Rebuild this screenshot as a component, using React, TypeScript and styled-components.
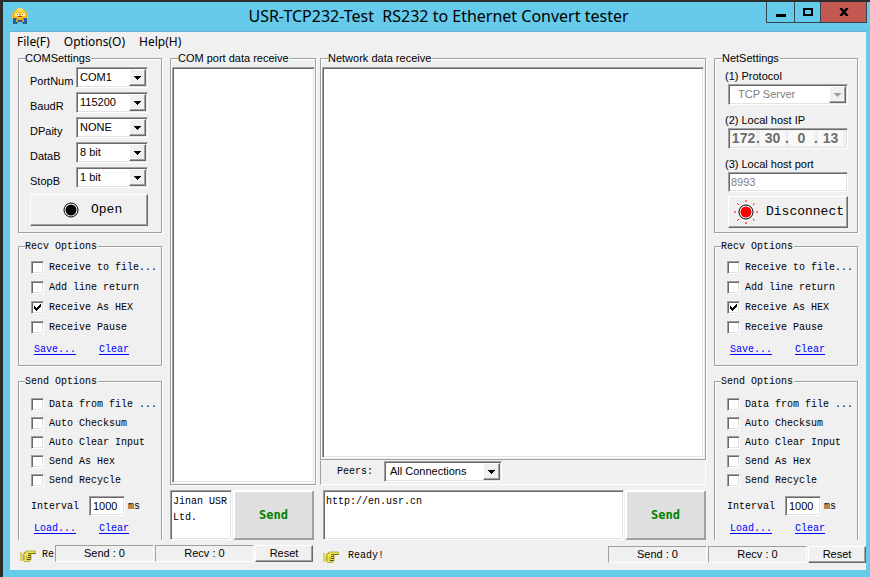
import React from "react";
import styled, { createGlobalStyle, css } from "styled-components";

const SANS = '"Liberation Sans", Arial, sans-serif';
const MONO = '"Liberation Mono", monospace';
const UI = '"Noto Sans", sans-serif';

const GlobalStyle = createGlobalStyle`
  *, *::before, *::after { box-sizing: border-box; }
  body { margin: 0; background: #2d2d2d; font: 11px/13px ${SANS}; color: #000; }
  button, input, select, textarea { font: inherit; color: inherit; margin: 0; border-radius: 0; }
`;

const sunken = css`
  border: 1px solid;
  border-color: #a0a0a0 #fff #fff #a0a0a0;
  box-shadow: inset 1px 1px #696969, inset -1px -1px #e3e3e3;
`;

const raised = css`
  border: 1px solid;
  border-color: #fff #696969 #696969 #fff;
  box-shadow: inset -1px -1px #a0a0a0;
`;

const Desktop = styled.div`
  min-height: 100vh;
  display: flex;
  padding: 2px 0 0 3px;
`;

const Window = styled.main`
  flex: 1;
  min-width: 0;
  display: flex;
  flex-direction: column;
  background: #66caea;
  padding: 0 4px 7px 7px;
`;

const TitleBar = styled.header`
  display: grid;
  grid-template-columns: 1fr auto 1fr;
  height: 30px;
  margin-right: -1px;
  border-bottom: 1px solid #6fb0cf;
`;

const AppIcon = styled.svg`
  margin: 6px 0 0 2px;
`;

const Title = styled.h1`
  margin: 0;
  font: 400 16px/28px ${UI};
  white-space: pre;
`;

const WindowButtons = styled.div`
  display: flex;
  justify-content: flex-end;
  height: 21px;
`;

const WindowButton = styled.button<{ $width: number; $close?: boolean }>`
  width: ${(p) => p.$width}px;
  padding: 0;
  display: grid;
  place-items: center;
  background: ${(p) => (p.$close ? "#c2584f" : "#66caea")};
  border: 1px solid #35454d;
  border-top: 0;
  & + & { margin-left: -1px; }
`;

const Client = styled.div`
  flex: 1;
  display: flex;
  flex-direction: column;
  background: #f0f0f0;
`;

const MenuBar = styled.nav`
  display: flex;
  gap: 14px;
  height: 20px;
  padding-left: 7px;
`;

const MenuItem = styled.button`
  padding: 0;
  border: 0;
  background: none;
  font: 12px/18px ${UI};
`;

const Body = styled.div`
  flex: 1;
  display: grid;
  grid-template-columns: 144px 146px minmax(0, 1fr) 144px;
  column-gap: 8px;
  padding: 0 8px;
`;

const Column = styled.div<{ $gap: number; $pull?: boolean }>`
  display: flex;
  flex-direction: column;
  min-width: 0;
  gap: ${(p) => p.$gap}px;
  margin-left: ${(p) => (p.$pull ? "-4px" : "0")};
`;

const Group = styled.fieldset<{ $mono?: boolean; $pad: string; $open?: boolean; $grow?: boolean }>`
  display: flex;
  flex-direction: column;
  min-width: 0;
  margin: 0;
  padding: ${(p) => p.$pad};
  border: 1px solid #a0a0a0;
  box-shadow: 1px 1px #fff, inset 1px 1px #fff;
  font-family: ${(p) => (p.$mono ? MONO : SANS)};
  font-size: ${(p) => (p.$mono ? 10 : 11)}px;
  ${(p) => p.$grow && css`flex: 1;`}
  ${(p) => p.$open && css`
    flex: 1;
    margin-top: 2px;
    border-bottom: 0;
    box-shadow: 1px 0 #fff, inset 1px 1px #fff;
  `}
`;

const Legend = styled.legend<{ $inset: number }>`
  height: 12px;
  line-height: 13px;
  margin-left: ${(p) => p.$inset}px;
  padding: 0 1px 0 0;
  background: #f0f0f0;
`;

const FieldRow = styled.div`
  display: flex;
  align-items: flex-end;
  justify-content: space-between;
  margin-bottom: 4px;
`;

const Combo = styled.span<{ $width: string }>`
  display: grid;
  grid-template-columns: minmax(0, 1fr);
  width: ${(p) => p.$width};
  height: 21px;
  background: #fff;
  padding: 1px;
  ${sunken}
  & > * { grid-area: 1 / 1; }
`;

const ComboSelect = styled.select<{ $indent: number }>`
  appearance: none;
  width: 100%;
  padding: 0 18px 0 ${(p) => p.$indent}px;
  border: 0;
  background: transparent;
  font: 11px/13px ${SANS};
  &:disabled { color: #808080; opacity: 1; }
`;

const ComboArrow = styled.span`
  justify-self: end;
  display: grid;
  place-items: center;
  width: 17px;
  background: #f0f0f0;
  pointer-events: none;
  ${raised}
`;

const ActionArea = styled.div<{ $top: number }>`
  display: grid;
  padding-top: ${(p) => p.$top}px;
`;

const PushButton = styled.button<{ $pad: number; $gap: number }>`
  display: flex;
  align-items: center;
  gap: ${(p) => p.$gap}px;
  height: 32px;
  padding: 0 0 0 ${(p) => p.$pad}px;
  background: #f0f0f0;
  font: 13px/16px ${MONO};
  white-space: nowrap;
  ${raised}
`;

const NetLabel = styled.label`
  display: block;
  margin: 0 0 1px -3px;
`;

const NetField = styled.div<{ $gap: number }>`
  margin-bottom: ${(p) => p.$gap}px;
`;

const TextField = styled.input<{ $width: string; $pad: number }>`
  display: block;
  width: ${(p) => p.$width};
  height: 20px;
  padding: 0 ${(p) => p.$pad}px;
  background: #fff;
  font: 11px/13px ${SANS};
  ${sunken}
  &:disabled { color: #808080; }
`;

const IpBox = styled.div`
  display: flex;
  align-items: center;
  height: 21px;
  padding: 0 4px 0 2px;
  background: #f0f0f0;
  color: #6d6d6d;
  font: 700 14px/17px ${SANS};
  ${sunken}
`;

const IpCell = styled.input`
  flex: 1;
  min-width: 0;
  width: 0;
  height: 15px;
  padding: 0;
  border: 0;
  background: #f9f9f9;
  text-align: center;
`;

const CheckRow = styled.label<{ $height: number }>`
  display: flex;
  align-items: center;
  gap: 5px;
  height: ${(p) => p.$height}px;
  white-space: nowrap;
`;

const CheckFace = styled.span`
  display: grid;
  width: 13px;
  height: 13px;
  flex: none;
  & > * { grid-area: 1 / 1; }
  & > svg { place-self: center; pointer-events: none; visibility: hidden; }
  & > input:checked + svg { visibility: visible; }
`;

const CheckInput = styled.input`
  appearance: none;
  width: 13px;
  height: 13px;
  background: #fff;
  ${sunken}
`;

const Links = styled.div`
  display: flex;
  gap: 23px;
  margin-top: 6px;
  padding-left: 3px;
  line-height: 14px;
`;

const Link = styled.a`
  color: #00f;
  text-underline-offset: 2px;
`;

const IntervalRow = styled.label`
  display: flex;
  align-items: center;
  gap: 3px;
  height: 20px;
  margin-top: 6px;
`;

const IntervalText = styled.span`
  width: 55px;
`;

const Memo = styled.textarea`
  flex: 1;
  min-width: 0;
  display: block;
  width: 100%;
  padding: 3px 2px;
  background: #fff;
  resize: none;
  font: 10px/16px ${MONO};
  ${sunken}
`;

const Stack = styled.div`
  flex: 1;
  display: flex;
  flex-direction: column;
`;

const PeersBar = styled.div`
  display: flex;
  align-items: center;
  gap: 11px;
  height: 25px;
  padding: 0 0 2px 16px;
  border: 1px solid;
  border-color: #f0f0f0 #fff #fff #a0a0a0;
  font: 10px/13px ${MONO};
`;

const SendRow = styled.div<{ $pad: string }>`
  display: flex;
  gap: 1px;
  height: 50px;
  padding: ${(p) => p.$pad};
`;

const SendButton = styled.button`
  width: 81px;
  flex: none;
  padding: 0;
  background: #dfdfdf;
  color: #008000;
  border: 2px solid;
  border-color: #fff #a0a0a0 #a0a0a0 #fff;
  font: 700 12px/16px "DejaVu Sans Mono", monospace;
`;

const StatusBar = styled.footer`
  display: flex;
  height: 30px;
`;

const StatusPart = styled.div<{ $width?: string; $top: number }>`
  display: flex;
  align-items: flex-start;
  width: ${(p) => p.$width ?? "auto"};
  ${(p) => !p.$width && css`flex: 1;`}
  padding: ${(p) => p.$top}px 0 0 10px;
`;

const StatusText = styled.span<{ $gap: number }>`
  flex: 1;
  min-width: 0;
  display: flex;
  gap: ${(p) => p.$gap}px;
  align-items: center;
  height: 20px;
  font: 10px/20px ${MONO};
  & > svg { flex: none; }
`;

const StatusCell = styled.output`
  width: 99px;
  height: 17px;
  margin-right: 1px;
  border: 1px solid;
  border-color: #a0a0a0 #fff #fff #a0a0a0;
  text-align: center;
  line-height: 15px;
`;

const ResetButton = styled.button`
  width: 58px;
  height: 17px;
  padding: 0;
  background: #f0f0f0;
  line-height: 13px;
  ${raised}
`;

const Arrow = ({ color = "#000" }: { color?: string }) => (
  <svg width="7" height="4" viewBox="0 0 7 4" shapeRendering="crispEdges">
    <path d="M0 0h7v1H0zM1 1h5v1H1zM2 2h3v1H2zM3 3h1v1H3z" fill={color} />
  </svg>
);

const Hand = () => (
  <svg width="16" height="13" viewBox="0 0 16 13">
    <path d="M1 3v9" stroke="#d3cb3a" strokeWidth="1.500" />
    <path d="M3 5l3-3h9.500v2.500H10L11 6v5l-2 1.500H4.500L3 11z" fill="#efe64a" stroke="#a39c34" strokeWidth=".8" />
    <path d="M8 4.500h7.500" stroke="#6b6628" />
    <path d="M8 6.500h3M8 8.500h3M7 10.500h3.500" stroke="#4a4720" />
    <path d="M4 6v5M6 3l-2 2M7 7v4" stroke="#8f8a30" strokeWidth=".8" />
  </svg>
);

function Select({ id, value, width, indent = 2, disabled }: {
  id: string; value: string; width: string; indent?: number; disabled?: boolean;
}) {
  return (
    <Combo $width={width}>
      <ComboSelect id={id} $indent={indent} disabled={disabled} defaultValue={value}>
        <option>{value}</option>
      </ComboSelect>
      <ComboArrow><Arrow color={disabled ? "#a0a0a0" : "#000"} /></ComboArrow>
    </Combo>
  );
}

function Check({ label, height, checked }: { label: string; height: number; checked?: boolean }) {
  return (
    <CheckRow $height={height}>
      <CheckFace>
        <CheckInput type="checkbox" defaultChecked={checked} />
        <svg width="7" height="7" viewBox="0 0 7 7" shapeRendering="crispEdges">
          <path d="M0 2h1v3H0zM1 3h1v3H1zM2 4h1v3H2zM3 3h1v3H3zM4 2h1v3H4zM5 1h1v3H5zM6 0h1v3H6z" />
        </svg>
      </CheckFace>
      {label}
    </CheckRow>
  );
}

function OptionGroups() {
  return (
    <>
      <Group $mono $pad="5px 0 8px 12px">
        <Legend $inset={-6}>Recv Options</Legend>
        <Check height={20} label="Receive to file..." />
        <Check height={20} label="Add line return" />
        <Check height={20} label="Receive As HEX" checked />
        <Check height={20} label="Receive Pause" />
        <Links><Link href="#save">Save...</Link><Link href="#clear">Clear</Link></Links>
      </Group>
      <Group $mono $open $pad="8px 0 0 12px">
        <Legend $inset={-6}>Send Options</Legend>
        <Check height={19} label="Data from file ..." />
        <Check height={19} label="Auto Checksum" />
        <Check height={19} label="Auto Clear Input" />
        <Check height={19} label="Send As Hex" />
        <Check height={19} label="Send Recycle" />
        <IntervalRow>
          <IntervalText>Interval</IntervalText>
          <TextField $width="36px" $pad={3} defaultValue="1000" />
          ms
        </IntervalRow>
        <Links><Link href="#load">Load...</Link><Link href="#clear-send">Clear</Link></Links>
      </Group>
    </>
  );
}

const comFields = [
  ["PortNum", "COM1"],
  ["BaudR", "115200"],
  ["DPaity", "NONE"],
  ["DataB", "8 bit"],
  ["StopB", "1 bit"],
];

export default function App() {
  return (
    <Desktop>
      <GlobalStyle />
      <Window>
        <TitleBar>
          <AppIcon width="16" height="16" viewBox="0 0 16 16">
            <path d="M5 1h6l3 2 2 4v3l-2 2H2l-2-2V7l2-4z" fill="#f5b921" />
            <path d="M6 0h4l2 4H4z" fill="#ffd95a" />
            <path d="M3 5h4v3H3zM9 5h4v3H9z" fill="#fff3c0" />
            <path d="M5 6h1v1H5zM10 6h1v1h-1zM6 8h4v1H6z" fill="#9c4a10" />
            <path d="M1 10h3l3 2h2l3-2h3v6h-4l-1-2H6l-1 2H1z" fill="#2a5f96" />
            <path d="M4 11h2v3H4zM10 11h2v3h-2z" fill="#d99a2a" />
          </AppIcon>
          <Title>{"USR-TCP232-Test  RS232 to Ethernet Convert tester"}</Title>
          <WindowButtons>
            <WindowButton $width={29} aria-label="Minimize">
              <svg width="10" height="11"><path d="M0 7h10v3H0z" /></svg>
            </WindowButton>
            <WindowButton $width={27} aria-label="Maximize">
              <svg width="10" height="8"><path d="M1 1h8v6H1z" fill="none" stroke="#000" strokeWidth="2" /></svg>
            </WindowButton>
            <WindowButton $width={47} $close aria-label="Close">
              <svg width="10" height="8"><path d="M1.500 0l7 8M8.500 0l-7 8" stroke="#000" strokeWidth="2.400" /></svg>
            </WindowButton>
          </WindowButtons>
        </TitleBar>
        <Client>
          <MenuBar>
            <MenuItem>File(F)</MenuItem>
            <MenuItem>Options(O)</MenuItem>
            <MenuItem>Help(H)</MenuItem>
          </MenuBar>
          <Body>
            <Column $gap={7}>
              <Group $pad="3px 13px 6px 11px">
                <Legend $inset={-5}>COMSettings</Legend>
                {comFields.map(([label, value]) => (
                  <FieldRow key={label}>
                    <label htmlFor={label}>{label}</label>
                    <Select id={label} value={value} width="72px" />
                  </FieldRow>
                ))}
                <ActionArea $top={2}>
                  <PushButton $pad={32} $gap={12}>
                    <svg width="16" height="16" viewBox="0 0 16 16">
                      <circle cx="8" cy="8" r="7" fill="#fff" stroke="#000" />
                      <circle cx="8" cy="8" r="5.500" />
                    </svg>
                    Open
                  </PushButton>
                </ActionArea>
              </Group>
              <OptionGroups />
            </Column>
            <Column $gap={5}>
              <Group $grow $pad="3px 0 1px 1px">
                <Legend $inset={6}>COM port data receive</Legend>
                <Memo readOnly aria-label="COM port data receive" />
              </Group>
              <SendRow $pad="0 2px 0 0">
                <Memo aria-label="COM data to send" defaultValue={"Jinan USR\nLtd."} />
                <SendButton>Send</SendButton>
              </SendRow>
            </Column>
            <Column $gap={5} $pull>
              <Stack>
                <Group $grow $pad="3px 1px 1px 1px">
                  <Legend $inset={6}>Network data receive</Legend>
                  <Memo readOnly aria-label="Network data receive" />
                </Group>
                <PeersBar>
                  <label htmlFor="peers">Peers:</label>
                  <Select id="peers" value="All Connections" width="118px" indent={4} />
                </PeersBar>
              </Stack>
              <SendRow $pad="0 0 0 3px">
                <Memo aria-label="Network data to send" defaultValue="http://en.usr.cn" />
                <SendButton>Send</SendButton>
              </SendRow>
            </Column>
            <Column $gap={7}>
              <Group $pad="6px 9px 4px 13px">
                <Legend $inset={-6}>NetSettings</Legend>
                <NetField $gap={9}>
                  <NetLabel htmlFor="protocol">(1) Protocol</NetLabel>
                  <Select id="protocol" value="TCP Server" width="100%" indent={8} disabled />
                </NetField>
                <NetField $gap={9}>
                  <NetLabel htmlFor="ip0">(2) Local host IP</NetLabel>
                  <IpBox>
                    {["172", "30", "0", "13"].map((part, i) => (
                      <React.Fragment key={i}>
                        {i > 0 && "."}
                        <IpCell id={`ip${i}`} aria-label={`IP part ${i + 1}`} defaultValue={part} readOnly />
                      </React.Fragment>
                    ))}
                  </IpBox>
                </NetField>
                <NetField $gap={4}>
                  <NetLabel htmlFor="port">(3) Local host port</NetLabel>
                  <TextField id="port" $width="100%" $pad={2} defaultValue="8993" disabled />
                </NetField>
                <PushButton $pad={5} $gap={8}>
                  <svg width="24" height="24" viewBox="0 0 24 24">
                    <circle cx="12" cy="12" r="7" fill="#fff" stroke="#000" />
                    <circle cx="12" cy="12" r="5.500" fill="#f00" />
                    <path d="M12 0v2M12 22v2M0 12h2M22 12h2M3.500 3.500l1.500 1.500M19 19l1.500 1.500M3.500 20.500L5 19M19 5l1.500-1.500" stroke="#f00" />
                  </svg>
                  Disconnect
                </PushButton>
              </Group>
              <OptionGroups />
            </Column>
          </Body>
          <StatusBar>
            <StatusPart $width="303px" $top={5}>
              <StatusText $gap={6}><Hand />Re</StatusText>
              <StatusCell>Send : 0</StatusCell>
              <StatusCell>Recv : 0</StatusCell>
              <ResetButton>Reset</ResetButton>
            </StatusPart>
            <StatusPart $top={6}>
              <StatusText $gap={9}><Hand />Ready!</StatusText>
              <StatusCell>Send : 0</StatusCell>
              <StatusCell>Recv : 0</StatusCell>
              <ResetButton>Reset</ResetButton>
            </StatusPart>
          </StatusBar>
        </Client>
      </Window>
    </Desktop>
  );
}
